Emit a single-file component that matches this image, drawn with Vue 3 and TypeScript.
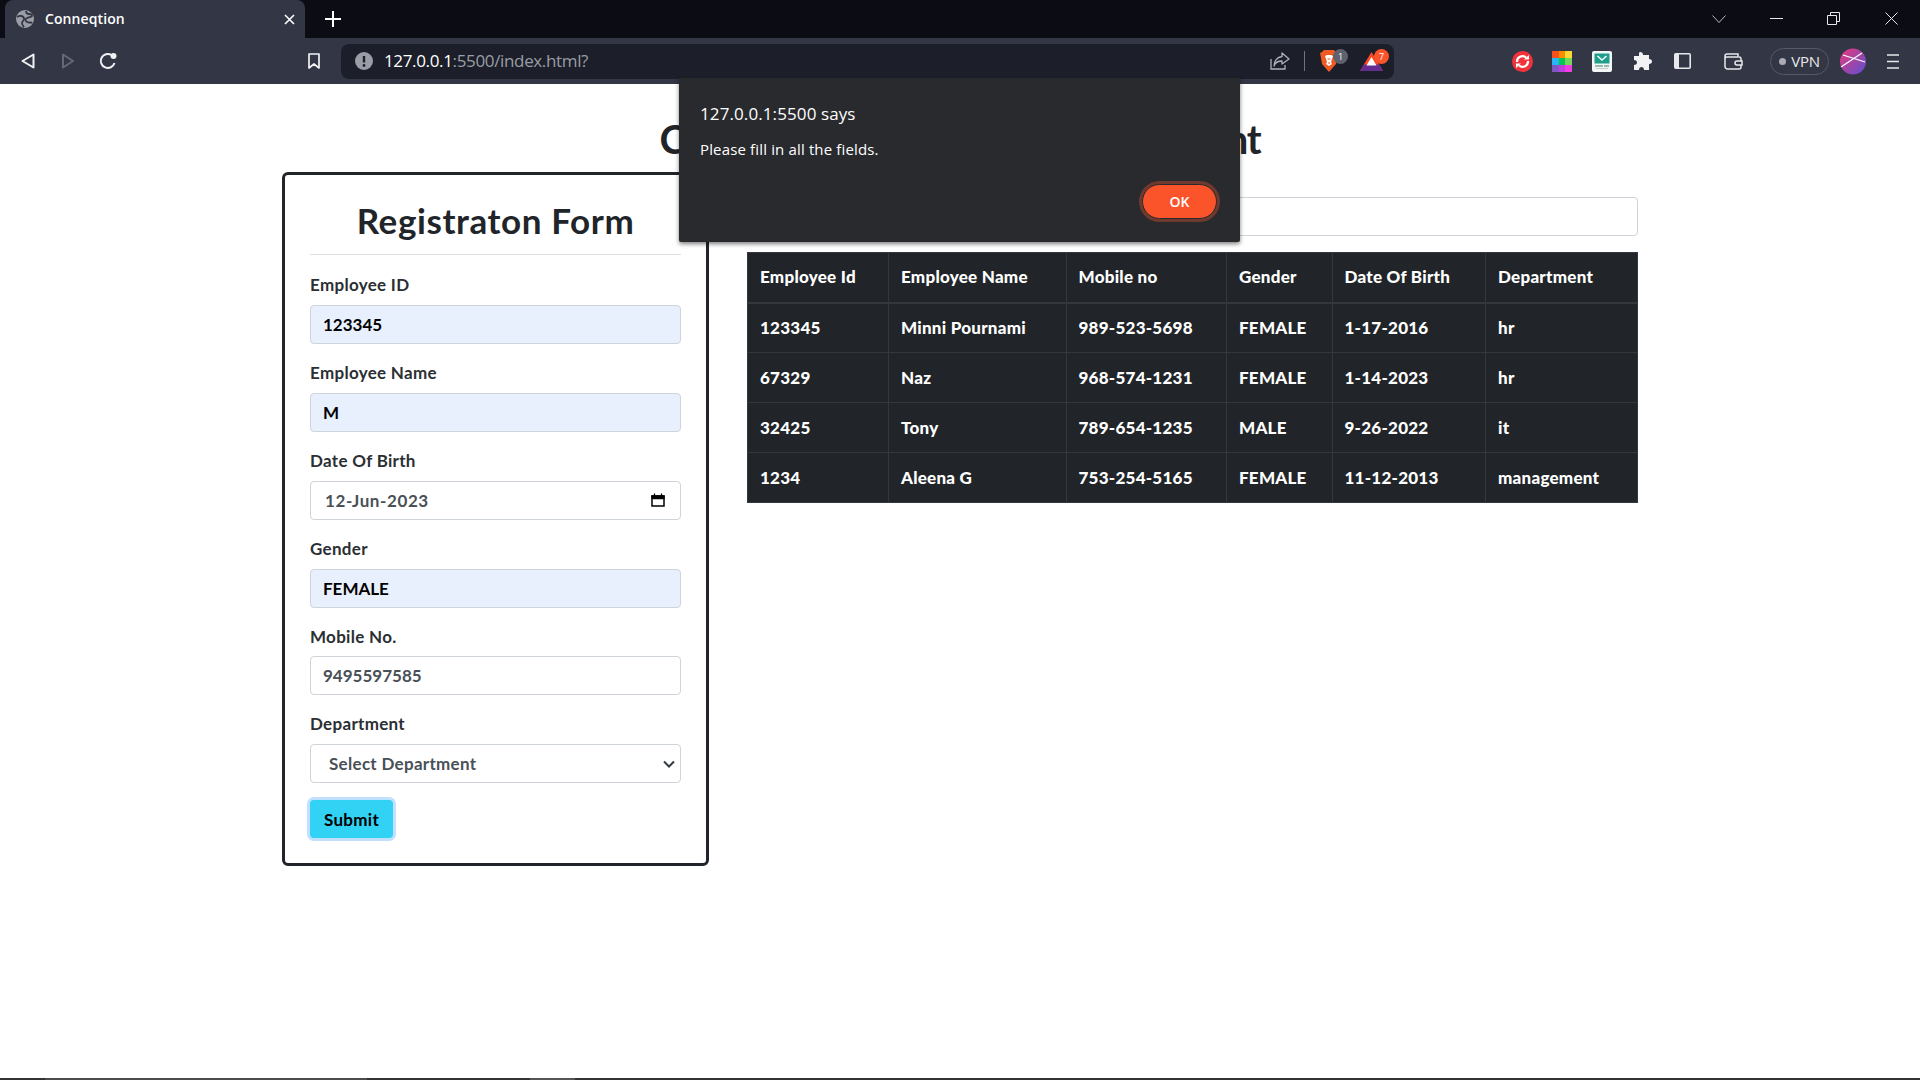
<script setup lang="ts">
interface Field {
  label: string;
  value: string;
  kind: "filled" | "plain" | "date" | "select";
}

const fields: Field[] = [
  { label: "Employee ID", value: "123345", kind: "filled" },
  { label: "Employee Name", value: "M", kind: "filled" },
  { label: "Date Of Birth", value: "12-Jun-2023", kind: "date" },
  { label: "Gender", value: "FEMALE", kind: "filled" },
  { label: "Mobile No.", value: "9495597585", kind: "plain" },
  { label: "Department", value: "Select Department", kind: "select" },
];

const columns = ["Employee Id", "Employee Name", "Mobile no", "Gender", "Date Of Birth", "Department"];

const rows: string[][] = [
  ["123345", "Minni Pournami", "989-523-5698", "FEMALE", "1-17-2016", "hr"],
  ["67329", "Naz", "968-574-1231", "FEMALE", "1-14-2023", "hr"],
  ["32425", "Tony", "789-654-1235", "MALE", "9-26-2022", "it"],
  ["1234", "Aleena G", "753-254-5165", "FEMALE", "11-12-2013", "management"],
];

const swatches = [
  "#f4511e", "#fb8c00", "#fdd835",
  "#29b6f6", "#00c853", "#76d65b",
  "#7e57c2", "#c13ee0", "#f03ee0",
];
</script>

<template>
  <div class="window">
    <div class="tabstrip">
      <div class="tab">
        <svg class="favicon" width="18" height="18" viewBox="0 0 18 18">
          <circle cx="9" cy="9" r="9" fill="#9a9da6" />
          <path d="M1 7c3-2 6-1 7 1s-2 3-2 5 1 3 2 4M10 1c0 2 1 3 3 3s3 1 3 2-3 1-5 2-2 3 0 4 4 0 5 1" fill="none" stroke="#333645" stroke-width="1.800" />
        </svg>
        <span class="tab-title">Conneqtion</span>
        <svg class="tab-close" width="11" height="11" viewBox="0 0 11 11">
          <path d="M1 1l9 9M10 1l-9 9" stroke="#fff" stroke-width="1.6" />
        </svg>
      </div>
      <svg class="new-tab" width="16" height="16" viewBox="0 0 16 16">
        <path d="M8 0v16M0 8h16" stroke="#fff" stroke-width="2" />
      </svg>
      <div class="win-controls">
        <svg class="win-chevron" width="14" height="8" viewBox="0 0 14 8">
          <path d="M.5.5L7 7.5 13.5.5" fill="none" stroke="#b8bac2" />
        </svg>
        <svg class="win-min" width="13" height="1" viewBox="0 0 13 1">
          <path d="M0 .5h13" stroke="#e8e8ea" />
        </svg>
        <svg class="win-restore" width="13" height="13" viewBox="0 0 13 13">
          <path d="M.5 3.5h9v9h-9zM3.5 3V.5h9v9H10" fill="none" stroke="#e8e8ea" />
        </svg>
        <svg class="win-close" width="13" height="13" viewBox="0 0 13 13">
          <path d="M.5.5l12 12M12.5.5l-12 12" stroke="#e8e8ea" />
        </svg>
      </div>
    </div>

    <div class="toolbar">
      <div class="btn">
        <svg width="14" height="16" viewBox="0 0 14 16">
          <path d="M12.5 1.5v13L1.5 8z" fill="none" stroke="#f2f2f4" stroke-width="2" stroke-linejoin="round" />
        </svg>
      </div>
      <div class="btn">
        <svg width="12" height="16" viewBox="0 0 12 16">
          <path d="M1 1.5v13L11 8z" fill="none" stroke="#666974" stroke-width="2" stroke-linejoin="round" />
        </svg>
      </div>
      <div class="btn">
        <svg width="18" height="18" viewBox="0 0 18 18">
          <path d="M15.5 11a7 7 0 1 1-3-8" fill="none" stroke="#f2f2f4" stroke-width="2" />
          <circle cx="14.5" cy="4" r="3" fill="#f2f2f4" />
        </svg>
      </div>
      <div class="btn bookmark">
        <svg width="12" height="16" viewBox="0 0 12 16">
          <path d="M1 1h10v14l-5-4-5 4z" fill="none" stroke="#f2f2f4" stroke-width="1.7" stroke-linejoin="round" />
        </svg>
      </div>

      <div class="omnibox">
        <svg class="info" width="18" height="18" viewBox="0 0 18 18">
          <circle cx="9" cy="9" r="9" fill="#9a9da6" />
          <path d="M9 4v6.5" stroke="#1d1f29" stroke-width="2.4" />
          <circle cx="9" cy="13.5" r="1.4" fill="#1d1f29" />
        </svg>
        <span class="url"><span class="host">127.0.0.1</span>:5500/index.html?</span>
        <div class="omni-right">
          <svg width="20" height="18" viewBox="0 0 20 18">
            <path d="M1 7v10h14v-4" fill="none" stroke="#aeb0b8" stroke-width="1.3" />
            <path d="M12 1l7 6-7 5V9C8 9 5 11 4 14c0-5 3-9 8-9.500z" fill="none" stroke="#aeb0b8" stroke-width="1.3" stroke-linejoin="round" />
          </svg>
          <span class="omni-sep"></span>
          <div class="shield-wrap">
            <svg width="18" height="22" viewBox="0 0 18 22">
              <path d="M4 0h10l2 2 2 1-1 5-1 6-7 8-7-8-1-6-1-5 2-1z" fill="#f15a22" />
              <path d="M5 6l2-1h4l2 1-1 3-1 3 1 2-3 2-3-2 1-2-1-3z" fill="#fff" />
              <path d="M7.500 9h3M9 12v2" stroke="#f15a22" stroke-width="1" />
            </svg>
            <span class="badge grey">1</span>
          </div>
          <div class="bat-wrap">
            <svg width="23" height="19" viewBox="0 0 23 19">
              <path d="M11.500 0L23 19H0z" fill="#ff4724" />
              <path d="M0 19l4-6.500h15l4 6.500z" fill="#662d91" />
              <path d="M11.500 5l5 8.500h-10z" fill="#fff" />
            </svg>
            <span class="badge orange">7</span>
          </div>
        </div>
      </div>

      <div class="btn ext-first">
        <svg width="21" height="21" viewBox="0 0 21 21">
          <circle cx="10.500" cy="10.500" r="10.500" fill="#f1323a" />
          <path d="M5 11a5.500 5.500 0 0 1 9-4.500M16 10a5.500 5.500 0 0 1-9 4.500" fill="none" stroke="#fff" stroke-width="2.200" />
          <path d="M12 8.500h5V4zM9 12.500H4V17z" fill="#fff" />
        </svg>
      </div>
      <div class="btn">
        <div class="swatches">
          <span v-for="c in swatches" :key="c" :style="{ background: c }"></span>
        </div>
      </div>
      <div class="btn">
        <svg width="20" height="21" viewBox="0 0 20 21">
          <rect width="20" height="21" rx="2" fill="#f4f6f5" />
          <rect x="2.500" y="2.500" width="15" height="10" fill="#1f9e8b" />
          <path d="M5.500 5l4.500 4 4.500-4" fill="none" stroke="#fff" stroke-width="1.500" />
          <path d="M3 15h8M12 15h5" stroke="#79a79f" stroke-width="1.500" />
          <path d="M4 17.500h12" stroke="#c4cfcc" />
        </svg>
      </div>
      <div class="btn">
        <svg width="19" height="18" viewBox="0 0 19 18">
          <path d="M7 0c2 0 3 1 3 3h6v4c2 0 3 1 3 2.500S18 12 16 12v6h-5c0-2-1-3-2.500-3S6 16 6 18H1v-5c2 0 3-1 3-2.500S3 8 1 8V4h5V3c0-2 0-3 1-3z" fill="#f2f2f4" />
        </svg>
      </div>
      <div class="btn">
        <svg width="17" height="16" viewBox="0 0 17 16">
          <rect x=".8" y=".8" width="15.400" height="14.400" rx="1" fill="none" stroke="#e8e8ea" stroke-width="1.600" />
          <rect x="1" y="1" width="4" height="14" fill="#e8e8ea" />
        </svg>
      </div>
      <div class="btn wallet">
        <svg width="19" height="17" viewBox="0 0 19 17">
          <path d="M3 1h11v3H3a2 2 0 0 0-2 2v-3a2 2 0 0 1 2-2zM1 5v8.500A2.500 2.500 0 0 0 3.500 16H15a2 2 0 0 0 2-2V6a2 2 0 0 0-2-2" fill="none" stroke="#e8e8ea" stroke-width="1.500" />
          <path d="M18 8h-5a2 2 0 0 0 0 4h5z" fill="#333645" stroke="#e8e8ea" stroke-width="1.500" />
        </svg>
      </div>
      <div class="vpn"><span class="vpn-dot"></span>VPN</div>
      <svg class="avatar" width="26" height="27" viewBox="0 0 26 27">
        <defs>
          <linearGradient id="avatar-fill" x1="0" y1="0" x2="1" y2="1">
            <stop offset="0" stop-color="#ec3a7c" />
            <stop offset="1" stop-color="#5b4fd0" />
          </linearGradient>
        </defs>
        <circle cx="13" cy="13.500" r="13" fill="url(#avatar-fill)" />
        <path d="M1 19L22 5M3 7l22 7" stroke="#fff" stroke-width="1.200" />
      </svg>
      <div class="btn menu">
        <svg width="12" height="15" viewBox="0 0 12 15">
          <path d="M0 1h12M0 7.500h12M0 14h12" stroke="#e8e8ea" stroke-width="1.500" />
        </svg>
      </div>
    </div>

    <main class="page">
      <h1 class="page-title">Conneqtion Employee Management</h1>
      <div class="columns">
        <form class="card">
          <h2 class="card-title">Registraton Form</h2>
          <hr class="rule" />
          <div v-for="f in fields" :key="f.label" class="group">
            <div class="label">{{ f.label }}</div>
            <div class="control" :class="f.kind">
              <span>{{ f.value }}</span>
              <svg v-if="f.kind === 'date'" width="14" height="14" viewBox="0 0 14 14">
                <path d="M1 3h12v10H1z" fill="none" stroke="#000" stroke-width="1.500" />
                <path d="M1 3h12v2.500H1zM3.500 .5v2M10.500 .5v2" stroke="#000" stroke-width="1.300" />
              </svg>
              <svg v-if="f.kind === 'select'" width="12" height="8" viewBox="0 0 12 8">
                <path d="M1 1.500l5 5 5-5" fill="none" stroke="#343a40" stroke-width="2" />
              </svg>
            </div>
          </div>
          <button type="button" class="submit">Submit</button>
        </form>

        <section class="list">
          <div class="search"></div>
          <table class="grid">
            <thead>
              <tr>
                <th v-for="c in columns" :key="c">{{ c }}</th>
              </tr>
            </thead>
            <tbody>
              <tr v-for="r in rows" :key="r[0]">
                <td v-for="(cell, i) in r" :key="i">{{ cell }}</td>
              </tr>
            </tbody>
          </table>
        </section>
      </div>

      <div class="alert">
        <div class="alert-title">127.0.0.1:5500 says</div>
        <div class="alert-msg">Please fill in all the fields.</div>
        <button type="button" class="alert-ok">OK</button>
      </div>
    </main>

    <div class="taskbar-edge">
      <span class="edge-a"></span>
      <span class="edge-b"></span>
    </div>
  </div>
</template>

<style>
html, body {
  margin: 0;
  height: 100%;
  overflow: hidden;
  background: #fff;
}
</style>

<style scoped>
.window {
  display: flex;
  flex-direction: column;
  height: 100vh;
  font-family: Lato, "Liberation Sans", sans-serif;
  color: #212529;
}

/* browser chrome */
.tabstrip {
  display: flex;
  align-items: center;
  height: 38px;
  padding-left: 5px;
  background: #0b0c14;
  flex: none;
}
.tab {
  display: flex;
  align-items: center;
  width: 300px;
  height: 38px;
  box-sizing: border-box;
  padding: 0 10px 0 11px;
  background: #333645;
  border-radius: 8px 8px 0 0;
}
.tab-title {
  margin: -2px 0 0 11px;
  font: 600 14px "Open Sans", sans-serif;
  letter-spacing: 0.1px;
  color: #fff;
}
.tab-close {
  margin-left: auto;
}
.new-tab {
  margin-left: 20px;
}
.win-controls {
  display: flex;
  align-items: center;
  margin-left: auto;
  padding-right: 22px;
  margin-top: -1px;
}
.win-chevron {
  margin-top: 1px;
}
.win-min {
  margin-left: 44px;
}
.win-restore {
  margin-left: 44px;
}
.win-close {
  margin-left: 45px;
}

.toolbar {
  display: flex;
  align-items: center;
  height: 46px;
  padding-left: 8px;
  background: #333645;
  flex: none;
}
.btn {
  display: flex;
  align-items: center;
  justify-content: center;
  width: 40px;
  height: 36px;
  flex: none;
}
.bookmark {
  margin-left: 166px;
}
.omnibox {
  display: flex;
  align-items: center;
  width: 1053px;
  height: 35px;
  margin-left: 7px;
  padding: 0 5px 0 14px;
  box-sizing: border-box;
  background: #1c1f29;
  border-radius: 8px;
  flex: none;
}
.url {
  margin: -2px 0 0 11px;
  font: 400 17px "Open Sans", sans-serif;
  letter-spacing: -0.35px;
  color: #9a9da6;
}
.host {
  color: #fff;
}
.omni-right {
  display: flex;
  align-items: center;
  margin-left: auto;
}
.omni-sep {
  width: 1px;
  height: 20px;
  margin: 0 14px;
  background: #70727c;
}
.shield-wrap,
.bat-wrap {
  position: relative;
  display: flex;
}
.shield-wrap {
  margin-left: 1px;
  margin-right: -1px;
}
.bat-wrap {
  margin-left: 23px;
  margin-right: 6px;
}
.badge {
  position: absolute;
  width: 15px;
  height: 15px;
  border-radius: 50%;
  font: 400 9px/15px "Open Sans", sans-serif;
  text-align: center;
  color: #fff;
}
.badge.grey {
  top: -1px;
  right: -10px;
  background: #5e616e;
}
.badge.orange {
  right: -6px;
  top: -3px;
  background: #fb542b;
}
.ext-first {
  margin-left: 108px;
}
.swatches {
  display: grid;
  grid-template-columns: repeat(3, 1fr);
  grid-template-rows: repeat(3, 1fr);
  width: 20px;
  height: 21px;
}
.wallet {
  margin-left: 11px;
}
.vpn {
  display: flex;
  align-items: center;
  justify-content: center;
  gap: 5px;
  width: 59px;
  height: 27px;
  margin-left: 17px;
  box-sizing: border-box;
  border: 1.500px solid #565967;
  border-radius: 14px;
  font: 400 15px "Open Sans", sans-serif;
  letter-spacing: -0.3px;
  color: #e8e8ea;
  flex: none;
}
.vpn-dot {
  width: 7px;
  height: 7px;
  border-radius: 50%;
  background: #a9acb6;
}
.avatar {
  margin-left: 11px;
  flex: none;
}
.menu {
  margin-left: 7px;
}

/* page */
.page {
  position: relative;
  flex: 1;
  min-height: 0;
  width: 1356px;
  margin: 0 auto;
}
.page-title {
  margin: 0;
  padding-top: 29px;
  height: 59px;
  font-size: 40px;
  line-height: 52px;
  font-weight: 700;
  letter-spacing: -1.2px;
  text-align: center;
  white-space: nowrap;
}
.columns {
  display: grid;
  grid-template-columns: 427px 891px;
  column-gap: 38px;
  align-items: start;
}
.card {
  height: 694px;
  box-sizing: border-box;
  padding: 25px 25px 0;
  border: 3px solid #212529;
  border-radius: 6px;
}
.card-title {
  margin: 0;
  font-size: 35px;
  line-height: 40px;
  font-weight: 700;
  letter-spacing: 0.6px;
  text-align: center;
}
.rule {
  height: 1px;
  margin: 14px 0 18px;
  border: 0;
  background: #dee0e2;
}
.group {
  margin-bottom: 17px;
}
.label {
  height: 24px;
  margin-bottom: 7.900px;
  font-size: 17px;
  line-height: 24px;
  font-weight: 700;
  letter-spacing: 0.3px;
  color: #2b2f33;
}
.control {
  display: flex;
  align-items: center;
  justify-content: space-between;
  height: 39px;
  box-sizing: border-box;
  padding: 0 12px;
  border: 1px solid #ced4da;
  border-radius: 4px;
  font-size: 17px;
  font-weight: 700;
  color: #495057;
}
.control.filled {
  background: #e8f0fe;
  color: #000;
}
.control.date {
  padding: 0 15px 0 14px;
  letter-spacing: 0.6px;
}
.control.select {
  padding: 0 5px 0 18px;
  letter-spacing: 0.3px;
}
.submit {
  display: block;
  width: 83px;
  height: 38px;
  padding: 0;
  border: 0;
  border-radius: 4px;
  background: #32d2f4;
  box-shadow: 0 0 0 3px #bfe0ff;
  font: 700 17px Lato, sans-serif;
  letter-spacing: 0.3px;
  color: #000;
}
.list {
  padding-top: 25px;
}
.search {
  height: 39px;
  box-sizing: border-box;
  border: 1px solid #ced4da;
  border-radius: 4px;
  margin-bottom: 16px;
}
.grid {
  width: 891px;
  table-layout: fixed;
  border-collapse: collapse;
  background: #212529;
  color: #fff;
  font-size: 17px;
  letter-spacing: 0.25px;
}
.grid th,
.grid td {
  height: 50px;
  padding: 0 12px;
  box-sizing: border-box;
  text-align: left;
  font-weight: 900;
  border: 1px solid #32383e;
  white-space: nowrap;
}
.grid th {
  padding-bottom: 2px;
  border-bottom-width: 2px;
}
.grid td {
  padding-bottom: 1px;
}
.grid th:nth-child(1) { width: 141px; }
.grid th:nth-child(2) { width: 177.500px; }
.grid th:nth-child(3) { width: 160.500px; }
.grid th:nth-child(4) { width: 105.500px; }
.grid th:nth-child(5) { width: 153.500px; }

/* native alert, sits over the page */
.alert {
  position: absolute;
  top: -6px;
  left: 397px;
  width: 561px;
  height: 164px;
  box-sizing: border-box;
  padding: 25px 20px 0 21px;
  background: #292a2d;
  border-radius: 0 0 2px 2px;
  box-shadow: 0 2px 4px rgba(0, 0, 0, 0.5);
  font-family: "Open Sans", sans-serif;
  color: #fff;
}
.alert-title {
  font-size: 17px;
  line-height: 22px;
  letter-spacing: 0.1px;
}
.alert-msg {
  margin-top: 14px;
  font-size: 15px;
  line-height: 20px;
  letter-spacing: 0.15px;
}
.alert-ok {
  position: absolute;
  right: 23px;
  top: 106px;
  width: 75px;
  height: 35px;
  padding: 0;
  border: 1px solid #292a2d;
  border-radius: 18px;
  background: #fb542b;
  box-shadow: 0 0 0 3px #6e3a2d;
  font: 600 14px "Open Sans", sans-serif;
  color: #fff;
}

.taskbar-edge {
  display: flex;
  height: 2px;
  padding-left: 45px;
  background: #333;
  flex: none;
}
.edge-a {
  width: 322px;
  background: #4c4c4c;
}
.edge-b {
  width: 45px;
  margin-left: 163px;
  background: #555;
}
</style>
